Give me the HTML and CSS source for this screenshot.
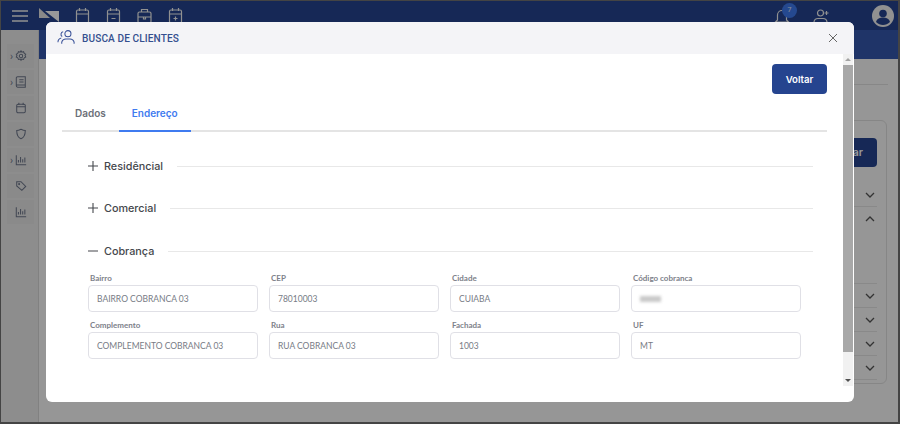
FILE: index.html
```html
<!DOCTYPE html>
<html lang="pt-BR">
<head>
<meta charset="utf-8">
<title>Busca de clientes</title>
<link rel="stylesheet" href="styles.css">
</head>
<body>
<div class="frame">
  <header class="topbar">
    <svg class="ic burger" viewBox="0 0 16 12"><path d="M0 1h16M0 6h16M0 11h16"/></svg>
    <svg class="logo" viewBox="0 0 20 14"><path class="l1" d="M0 0v10h11z"/><path class="l2" d="M6 3h14v11z"/></svg>
    <div class="top-icons">
      <svg class="ic" viewBox="0 0 15 18"><rect x="1.500" y="3" width="12" height="13" rx="1.500"/><path d="M1.500 7h12M4.500 1v3M10.500 1v3"/></svg>
      <svg class="ic" viewBox="0 0 15 18"><rect x="1.500" y="3" width="12" height="13" rx="1.500"/><path d="M1.500 7h12M4.500 1v3M10.500 1v3M5.500 11.500h4"/></svg>
      <svg class="ic" viewBox="0 0 15 18"><rect x="1" y="5" width="13" height="11" rx="1.500"/><path d="M4.500 5V2.500h6V5M1 10h13M6.500 10v2h2v-2"/></svg>
      <svg class="ic" viewBox="0 0 15 18"><rect x="1.500" y="3" width="12" height="13" rx="1.500"/><path d="M1.500 7h12M4.500 1v3M10.500 1v3M7.500 9.500v4M5.500 11.500h4"/></svg>
    </div>
    <div class="top-right">
      <div class="bell">
        <svg class="ic" viewBox="0 0 16 17"><path d="M3.500 12V7a4.500 4.500 0 0 1 9 0v5l2 2h-13zM6 16h4"/></svg>
        <span class="badge">7</span>
      </div>
      <svg class="ic add-user" viewBox="0 0 17 15"><circle cx="7.500" cy="4" r="3"/><path d="M1 14.500v-1.500a4 4 0 0 1 4-3.500h5a4 4 0 0 1 4 3.500v1.500M13.500 2v4M11.500 4h4"/></svg>
      <svg class="avatar" viewBox="0 0 22 22"><circle class="a-bg" cx="11" cy="11" r="11"/><circle class="a-fg" cx="11" cy="8.500" r="3.800"/><path class="a-fg" d="M4 17c1-3.500 4-4.500 7-4.500s6 1 7 4.500c-2 2-4.500 3-7 3s-5-1-7-3z"/></svg>
    </div>
  </header>
  <div class="subbar"></div>
  <div class="app">
    <aside class="sidebar">
      <div class="side-item"><i class="caret">›</i><svg class="ic" viewBox="0 0 14 14"><circle cx="7" cy="7" r="2"/><path d="M7 1l1 1.500 2-.500.800 1.900 1.700 1-.800 1.600.800 1.600-1.700 1-.800 1.900-2-.500-1 1.500-1-1.500-2 .500-.800-1.900-1.700-1 .800-1.600-.800-1.600 1.700-1 .800-1.900 2 .500z"/></svg></div>
      <div class="side-item"><i class="caret">›</i><svg class="ic" viewBox="0 0 14 14"><path d="M3 1h9v12H3a1.500 1.500 0 0 1-1.500-1.500v-9A1.500 1.500 0 0 1 3 1zM5 4.500h5M5 7h5M2 10.500h10"/></svg></div>
      <div class="side-item"><svg class="ic" viewBox="0 0 14 14"><rect x="2" y="2.500" width="10" height="10" rx="1.500"/><path d="M2 5.500h10M4.500 1v2.500M9.500 1v2.500"/></svg></div>
      <div class="side-item"><svg class="ic" viewBox="0 0 14 14"><path d="M7 1.500c2 1 3.500 1.500 5 1.500 0 5-1 8-5 9.500C3 11 2 8 2 3c1.500 0 3-.500 5-1.500z"/></svg></div>
      <div class="side-item"><i class="caret">›</i><svg class="ic" viewBox="0 0 14 14"><path d="M1.500 1.500v11h11.500M4 10V7M6.500 10V3.500M9 10V6M11.500 10V4"/></svg></div>
      <div class="side-item"><svg class="ic" viewBox="0 0 14 14"><path d="M2 2h5l5.500 5.500-4.500 4.500L2 7z"/><circle cx="4.800" cy="4.800" r=".6"/></svg></div>
      <div class="side-item"><svg class="ic" viewBox="0 0 14 14"><path d="M1.500 1.500v11h11.500M4 10V7M6.500 10V3.500M9 10V6M11.500 10V4"/></svg></div>
    </aside>
    <main class="content">
      <div class="content-rule"></div>
      <section class="bg-card">
        <button class="bg-button">Buscar</button>
        <ul class="bg-rows">
          <li class="r1"><svg viewBox="0 0 10 6"><path d="M1 1l4 4 4-4"/></svg></li>
          <li class="r2"><svg viewBox="0 0 10 6"><path d="M1 5l4-4 4 4"/></svg></li>
          <li class="r3"><svg viewBox="0 0 10 6"><path d="M1 1l4 4 4-4"/></svg></li>
          <li><svg viewBox="0 0 10 6"><path d="M1 1l4 4 4-4"/></svg></li>
          <li><svg viewBox="0 0 10 6"><path d="M1 1l4 4 4-4"/></svg></li>
          <li><svg viewBox="0 0 10 6"><path d="M1 1l4 4 4-4"/></svg></li>
        </ul>
      </section>
    </main>
  </div>
  <div class="overlay"></div>
  <div class="modal" role="dialog">
    <div class="modal-head">
      <svg class="head-icon" viewBox="0 0 20 16"><circle cx="11.500" cy="4.500" r="3.200"/><path d="M5 15v-1.500a4.500 4.500 0 0 1 4.500-3.500h4a4.500 4.500 0 0 1 4.500 3.500V15M6.500 2.500a2.700 2.700 0 0 0-1 5M1 13.500c0-2.500 1.500-4 3.500-4.500"/></svg>
      <h1 class="modal-title">BUSCA DE CLIENTES</h1>
      <svg class="close" viewBox="0 0 10 10"><path d="M1 1l8 8M9 1l-8 8"/></svg>
    </div>
    <div class="modal-body">
      <div class="modal-scroll">
        <div class="actions"><button class="btn-back">Voltar</button></div>
        <nav class="tabs">
          <a class="tab">Dados</a>
          <a class="tab active">Endereço</a>
        </nav>
        <div class="sections">
          <div class="divider"><svg class="tog" viewBox="0 0 10 10"><path d="M0 5h10M5 0v10"/></svg><span>Residêncial</span></div>
          <div class="divider"><svg class="tog" viewBox="0 0 10 10"><path d="M0 5h10M5 0v10"/></svg><span>Comercial</span></div>
          <div class="divider last"><svg class="tog" viewBox="0 0 10 10"><path d="M0 5h10"/></svg><span>Cobrança</span></div>
          <div class="fields">
            <label class="field"><span>Bairro</span><div class="input">BAIRRO COBRANCA 03</div></label>
            <label class="field"><span>CEP</span><div class="input">78010003</div></label>
            <label class="field"><span>Cidade</span><div class="input">CUIABA</div></label>
            <label class="field"><span>Código cobranca</span><div class="input"><i class="blur"></i></div></label>
            <label class="field"><span>Complemento</span><div class="input">COMPLEMENTO COBRANCA 03</div></label>
            <label class="field"><span>Rua</span><div class="input">RUA COBRANCA 03</div></label>
            <label class="field"><span>Fachada</span><div class="input">1003</div></label>
            <label class="field"><span>UF</span><div class="input">MT</div></label>
          </div>
        </div>
      </div>
      <div class="scrollbar">
        <i class="arrow up"></i>
        <div class="track"><div class="thumb"></div></div>
        <i class="arrow down"></i>
      </div>
    </div>
  </div>
</div>
</body>
</html>
```
FILE: styles.css
```css
* { box-sizing: border-box; }
html, body { margin: 0; height: 100%; }
body { font-family: Inter, "Liberation Sans", sans-serif; overflow: hidden; }

.frame {
  position: relative;
  width: 900px;
  height: 424px;
  display: flex;
  flex-direction: column;
  background: #fafafa;
  border-style: solid;
  border-color: #444;
  border-width: 1px 2px 2px 1px;
  overflow: hidden;
}

.ic { fill: none; stroke: currentColor; stroke-width: 1.2; }

/* top bar */
.topbar {
  height: 29px;
  flex: none;
  background: #25448f;
  color: #f2f2f2;
  display: flex;
  align-items: center;
  padding: 0 4px 0 11px;
}
.burger { width: 16px; height: 12px; stroke-width: 1.500; margin-right: 11px; flex: none; }
.logo { width: 20px; height: 14px; margin-right: 16px; margin-top: -1px; flex: none; }
.logo .l1 { fill: #e4e4e4; }
.logo .l2 { fill: #fff; }
.top-icons { display: flex; gap: 16px; }
.top-icons .ic { width: 15px; height: 18px; }
.top-right { margin-left: auto; display: flex; align-items: center; }
.bell { position: relative; width: 16px; height: 17px; margin-right: 23px; margin-top: 2px; }
.bell .ic { width: 16px; height: 17px; display: block; }
.badge {
  position: absolute;
  top: -5px;
  left: 8px;
  width: 15px;
  height: 15px;
  border-radius: 50%;
  background: #3f7bf0;
  color: #e8eefc;
  font: 7px/15px Roboto, sans-serif;
  text-align: center;
}
.add-user { width: 17px; height: 15px; margin-right: 42px; margin-top: 2px; }
.avatar { width: 22px; height: 22px; }
.a-bg { fill: #f2f2f2; }
.a-fg { fill: #25448f; }

.subbar { height: 29px; flex: none; background: #3558ad; }

/* base page */
.app { flex: 1; display: flex; min-height: 0; }
.sidebar {
  width: 38px;
  margin-top: -29px;
  position: relative;
  flex: none;
  background: #ececec;
  border-right: 1px solid #d8d8d8;
  padding: 14px 4px 0 6px;
  display: flex;
  flex-direction: column;
  gap: 2px;
  color: #6d768a;
}
.side-item {
  position: relative;
  height: 24px;
  background: #e7e7e7;
  display: flex;
  align-items: center;
  justify-content: center;
}
.side-item .ic { width: 12px; height: 12px; }
.caret {
  position: absolute;
  left: 3px;
  top: 7px;
  font: normal 10px/12px Roboto, sans-serif;
}
.content { flex: 1; position: relative; }
.content-rule { position: absolute; left: 800px; right: 10px; top: 25px; height: 1px; background: #e2e2e2; }
.bg-card {
  position: absolute;
  left: 700px;
  right: 11px;
  top: 61px;
  height: 264px;
  border: 1px solid #e0e0e0;
  border-radius: 6px;
  background: #fafafa;
  padding: 16px 9px 0 0;
}
.bg-button {
  display: block;
  margin: 1px 0 0 auto;
  width: 60px;
  height: 29px;
  border: 0;
  border-radius: 4px;
  background: #25448f;
  color: #fff;
  font: 600 10.500px Inter, sans-serif;
  text-align: right;
  padding-right: 14px;
}
.bg-rows { list-style: none; margin: 16px 0 0; padding: 0; }
.bg-rows li { height: 24px; border-bottom: 1px solid #e4e4e4; position: relative; }
.bg-rows .r2 { height: 77px; }
.bg-rows svg {
  position: absolute;
  right: 2px;
  top: 9px;
  width: 10px;
  height: 6px;
  fill: none;
  stroke: #555;
  stroke-width: 1.3;
}

.overlay { position: absolute; inset: 0; background: rgba(0, 0, 0, .4); }

/* modal */
.modal {
  position: absolute;
  left: 45px;
  top: 21px;
  width: 808px;
  height: 380px;
  background: #fff;
  border-radius: 6px;
  display: flex;
  flex-direction: column;
  overflow: hidden;
}
.modal-head {
  height: 32px;
  flex: none;
  background: #f4f4f7;
  display: flex;
  align-items: center;
  padding: 0 16px 0 11px;
}
.head-icon { width: 19px; height: 16px; fill: none; stroke: #3a5299; stroke-width: 1.100; margin-right: 6px; margin-top: -2px; }
.modal-title { margin: 0; font: 500 10.100px Roboto, sans-serif; letter-spacing: .1px; color: #34508f; }
.close { width: 10px; height: 10px; margin-left: auto; fill: none; stroke: #666; stroke-width: 1; }

.modal-body { flex: 1; display: flex; min-height: 0; }
.modal-scroll { flex: 1; padding: 10px 16px 0 16px; min-width: 0; }
.actions { display: flex; justify-content: flex-end; }
.btn-back {
  width: 55px;
  height: 30px;
  border: 0;
  border-radius: 4px;
  background: #25448f;
  color: #fff;
  font: 600 9.600px Inter, sans-serif;
}
.tabs { display: flex; margin-top: 6px; height: 32px; border-bottom: 2px solid #e4e4e4; }
.tab {
  font: 600 10px/26px Inter, sans-serif;
  color: #6b6f78;
  padding: 0 13px;
  height: 32px;
  border-bottom: 2px solid transparent;
}
.tab.active { color: #3f7bf0; border-bottom-color: #3f7bf0; }

.sections { padding: 0 14px 0 26px; }
.divider {
  display: flex;
  align-items: center;
  height: 16px;
  margin-top: 26px;
  font: 500 10.800px Inter, sans-serif;
  color: #44474c;
}
.divider:first-child { margin-top: 26px; }
.divider.last { margin-top: 27px; }
.divider::after { content: ""; flex: 1; height: 1px; background: #e8e8e8; margin-left: 14px; }
.tog { width: 10px; height: 10px; margin-right: 6px; fill: none; stroke: #44474c; stroke-width: 1.100; flex: none; }

.fields {
  display: grid;
  grid-template-columns: repeat(4, 170px);
  column-gap: 11px;
  row-gap: 6px;
  margin-top: 12px;
}
.field { display: block; }
.field span {
  display: block;
  font: 700 8px/14px Lato, sans-serif;
  color: #7d818a;
  padding-left: 2px;
}
.input {
  height: 27px;
  border: 1px solid #e0e0e6;
  border-radius: 4px;
  padding: 1px 0 0 8px;
  font: 400 8.500px/25px Lato, sans-serif;
  color: #777b85;
  display: flex;
  align-items: center;
}
.blur { display: block; width: 21px; height: 6px; background: #c9c9c9; filter: blur(1.500px); }

/* scrollbar */
.scrollbar {
  width: 10px;
  margin-right: 1px;
  height: 332px;
  flex: none;
  background: #f1f1f1;
  display: flex;
  flex-direction: column;
  align-items: center;
}
.arrow { flex: none; width: 0; height: 0; border-left: 3px solid transparent; border-right: 3px solid transparent; margin: 4px 0; }
.arrow.up { border-bottom: 3px solid #a3a3a3; }
.arrow.down { border-top: 3px solid #505050; }
.track { flex: 1; width: 100%; }
.thumb { height: 287px; background: #a8a8a8; }
```
